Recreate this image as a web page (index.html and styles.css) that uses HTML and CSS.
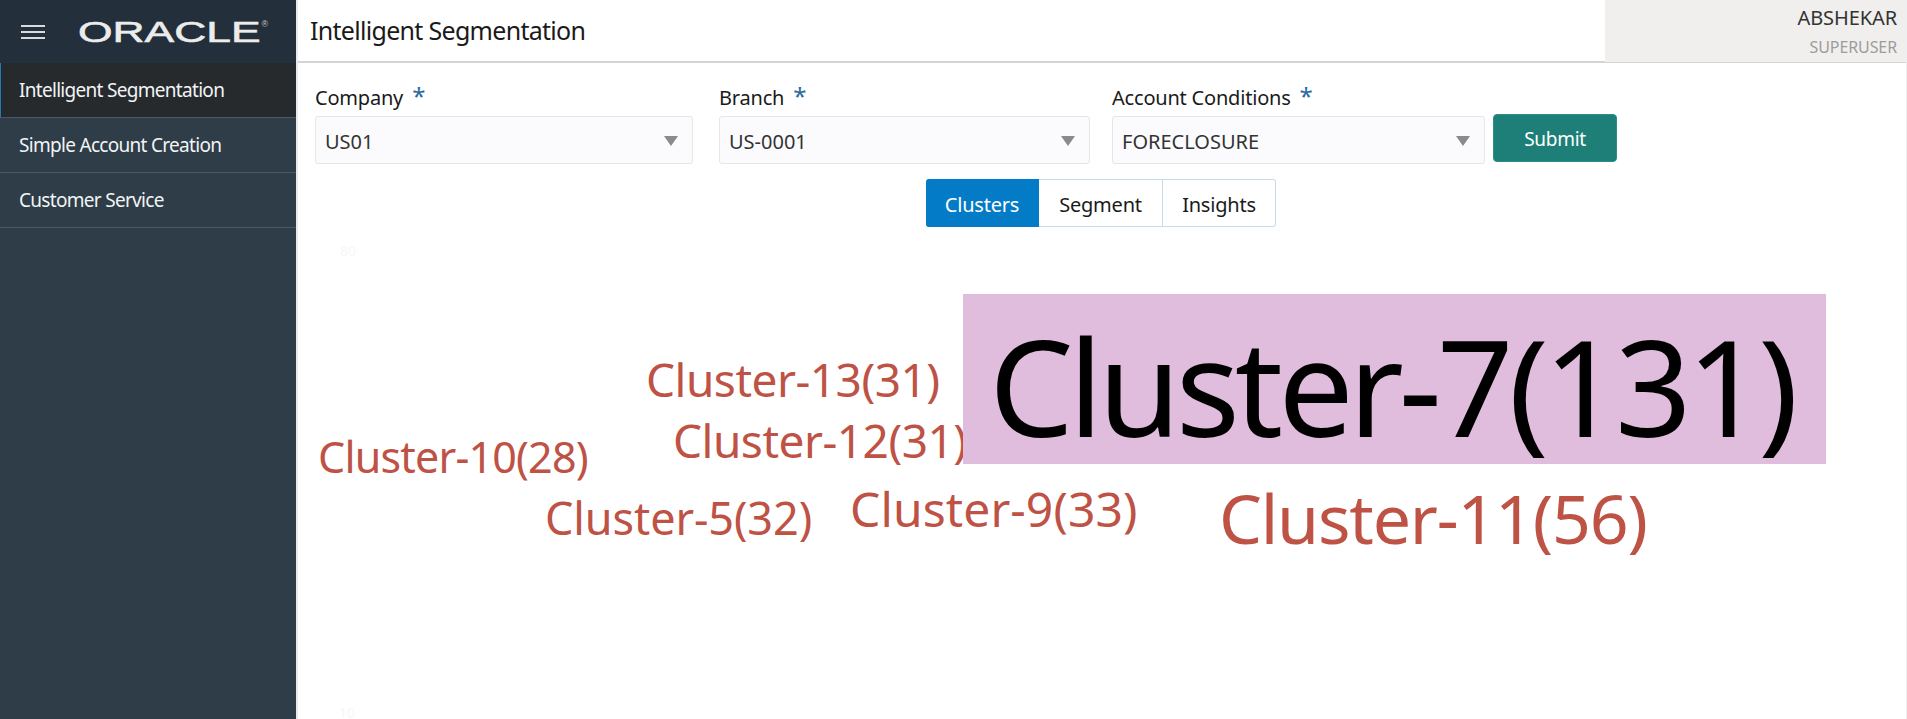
FILE: index.html
```html
<!DOCTYPE html>
<html>
<head>
    <title>Intelligent Segmentation</title>
    <link rel="stylesheet" href="styles.css">
</head>
<body>
    <div class="app">
        <aside class="sidebar">
            <div class="brand">
                <div class="hamburger"><span></span><span></span><span></span></div>
                <div class="logo"><span class="logo-text">ORACLE</span><span class="logo-reg">®</span></div>
            </div>
            <nav class="nav">
                <a class="nav-item active">Intelligent Segmentation</a>
                <a class="nav-item">Simple Account Creation</a>
                <a class="nav-item">Customer Service</a>
            </nav>
        </aside>

        <main class="main">
            <header class="topbar">
                <h1>Intelligent Segmentation</h1>
                <div class="user">
                    <div class="user-name">ABSHEKAR</div>
                    <div class="user-role">SUPERUSER</div>
                </div>
            </header>

            <div class="filters">
                <div class="field field-company">
                    <label>Company <span class="req">*</span></label>
                    <div class="select">US01<span class="caret"></span></div>
                </div>
                <div class="field field-branch">
                    <label>Branch <span class="req">*</span></label>
                    <div class="select">US-0001<span class="caret"></span></div>
                </div>
                <div class="field field-conditions">
                    <label>Account Conditions <span class="req">*</span></label>
                    <div class="select">FORECLOSURE<span class="caret"></span></div>
                </div>
                <button class="submit">Submit</button>
            </div>

            <div class="tabs">
                <button class="tab tab-clusters selected">Clusters</button>
                <button class="tab tab-segment">Segment</button>
                <button class="tab tab-insights">Insights</button>
            </div>

            <div class="cloud">
                <span class="axis axis-top">80</span>
                <span class="axis axis-bottom">10</span>
                <span class="word word-13">Cluster-13(31)</span>
                <span class="word word-12">Cluster-12(31)</span>
                <span class="word word-10">Cluster-10(28)</span>
                <span class="word word-5">Cluster-5(32)</span>
                <span class="word word-9">Cluster-9(33)</span>
                <span class="word word-11">Cluster-11(56)</span>
                <span class="word word-7">Cluster-7(131)</span>
            </div>
        </main>
    </div>
</body>
</html>
```

FILE: styles.css
```css
* {
    box-sizing: border-box;
}

html, body {
    margin: 0;
    height: 100%;
    overflow: hidden;
}

body {
    font-family: 'Noto Sans', 'Open Sans', sans-serif;
    background-color: #fff;
    color: #1a1a1a;
}

.app {
    display: flex;
    height: 719px;
}

/* Sidebar */
.sidebar {
    width: 298px;
    flex-shrink: 0;
    background-color: #2e3d48;
    border-right: 2px solid #e6ebf0;
}

.brand {
    display: flex;
    align-items: center;
    height: 63px;
    padding-left: 21px;
    background-color: #232f3b;
}

.hamburger {
    display: flex;
    flex-direction: column;
    justify-content: space-between;
    width: 24px;
    height: 14px;
    margin-right: 33px;
}

.hamburger span {
    display: block;
    height: 2px;
    background-color: #d8dadc;
}

.logo {
    display: flex;
    align-items: flex-start;
    width: 192px;
}

.logo-text {
    font-family: 'Liberation Sans', sans-serif;
    font-size: 30px;
    line-height: 30px;
    margin-right: 60px;
    transform: scaleX(1.48);
    transform-origin: left center;
    -webkit-text-stroke: 0.6px #ececec;
    color: #ececec;
}

.logo-reg {
    font-family: 'Liberation Sans', sans-serif;
    font-size: 9px;
    line-height: 14px;
    color: #c4c4c4;
}

.nav-item {
    display: flex;
    align-items: center;
    height: 55px;
    padding-left: 19px;
    font-size: 19px;
    letter-spacing: -0.7px;
    color: #f2f4f5;
    border-bottom: 1px solid #4a5863;
}

.nav-item.active {
    background-color: #262a2d;
    border-left: 1px solid #1f7ab5;
    padding-left: 18px;
}

/* Main column */
.main {
    flex: 1;
    display: flex;
    flex-direction: column;
    min-width: 0;
    border-right: 1px solid #eeeeee;
}

.topbar {
    display: flex;
    justify-content: space-between;
    height: 63px;
    border-bottom: 2px solid #d4d4d4;
}

.topbar h1 {
    margin: 0;
    padding: 10px 0 0 12px;
    font-size: 25px;
    font-weight: 400;
    letter-spacing: -0.7px;
    line-height: 40px;
}

.user {
    width: 301px;
    height: 62px;
    padding: 4px 9px 0 0;
    text-align: right;
    background-color: #f0efee;
}

.user-name {
    font-size: 20px;
    letter-spacing: -0.1px;
    line-height: 28px;
    color: #333;
}

.user-role {
    font-size: 16px;
    letter-spacing: -0.1px;
    line-height: 30px;
    color: #9c9c9c;
}

/* Filter row */
.filters {
    display: flex;
    align-items: flex-end;
    padding: 0 0 0 17px;
    height: 101px;
}

.field label {
    display: block;
    height: 36px;
    font-size: 20px;
    letter-spacing: -0.2px;
    line-height: 36px;
}

.req {
    margin-left: 4px;
    font-size: 24px;
    line-height: 20px;
    color: #2a6a9e;
}

.field-company {
    width: 378px;
    margin-right: 26px;
}

.field-branch {
    width: 371px;
    margin-right: 22px;
}

.field-conditions {
    width: 373px;
    margin-right: 8px;
}

.select {
    position: relative;
    height: 48px;
    padding-left: 9px;
    font-size: 20px;
    line-height: 49px;
    color: #333;
    background-color: #fbfbfd;
    border: 1px solid #e4e6ea;
    border-radius: 3px;
}

.caret {
    position: absolute;
    right: 14px;
    top: 19px;
    width: 0;
    height: 0;
    border-left: 7px solid transparent;
    border-right: 7px solid transparent;
    border-top: 10px solid #8a8a8a;
}

.submit {
    width: 124px;
    height: 48px;
    margin-bottom: 2px;
    padding-top: 2px;
    font-family: inherit;
    font-size: 19px;
    letter-spacing: -0.3px;
    color: #fff;
    background-color: #1d7f78;
    border: 1px solid #2a8f88;
    border-radius: 4px;
}

/* Tabs */
.tabs {
    display: flex;
    justify-content: flex-start;
    margin: 15px 0 0 628px;
}

.tab {
    height: 48px;
    padding: 2px 0 0;
    font-family: inherit;
    font-size: 20px;
    letter-spacing: -0.2px;
    color: #1a1a1a;
    background-color: #fff;
    border: 1px solid #c5dbe9;
    border-left: 0;
}

.tab-clusters {
    width: 113px;
    border-radius: 3px 0 0 3px;
}

.tab-segment {
    width: 124px;
}

.tab-insights {
    width: 113px;
    border-radius: 0 3px 3px 0;
}

.tab.selected {
    color: #fff;
    background-color: #037bc6;
    border-color: #037bc6;
}

/* Word cloud */
.cloud {
    position: relative;
    flex: 1;
}

.axis {
    position: absolute;
    font-size: 14px;
    color: #f7f7f7;
}

.axis-top {
    left: 42px;
    top: 14px;
}

.axis-bottom {
    left: 41px;
    top: 476px;
}

.word {
    position: absolute;
    line-height: 1;
    white-space: nowrap;
    color: #bd5245;
}

.word-13 {
    left: 348px;
    top: 129px;
    font-size: 46px;
    letter-spacing: -0.5px;
}

.word-12 {
    left: 375px;
    top: 190px;
    font-size: 46px;
    letter-spacing: -0.5px;
}

.word-10 {
    left: 20px;
    top: 208px;
    font-size: 43px;
    letter-spacing: -0.8px;
}

.word-5 {
    left: 247px;
    top: 268px;
    font-size: 45px;
    letter-spacing: -0.1px;
}

.word-9 {
    left: 552px;
    top: 258px;
    font-size: 48px;
    letter-spacing: 0.1px;
}

.word-11 {
    left: 921px;
    top: 257px;
    font-size: 68px;
    letter-spacing: -1.2px;
}

.word-7 {
    left: 665px;
    top: 67px;
    width: 863px;
    height: 170px;
    padding-left: 26px;
    font-size: 134px;
    letter-spacing: -5.1px;
    line-height: 183px;
    color: #000;
    background-color: #e1bddd;
}
```
